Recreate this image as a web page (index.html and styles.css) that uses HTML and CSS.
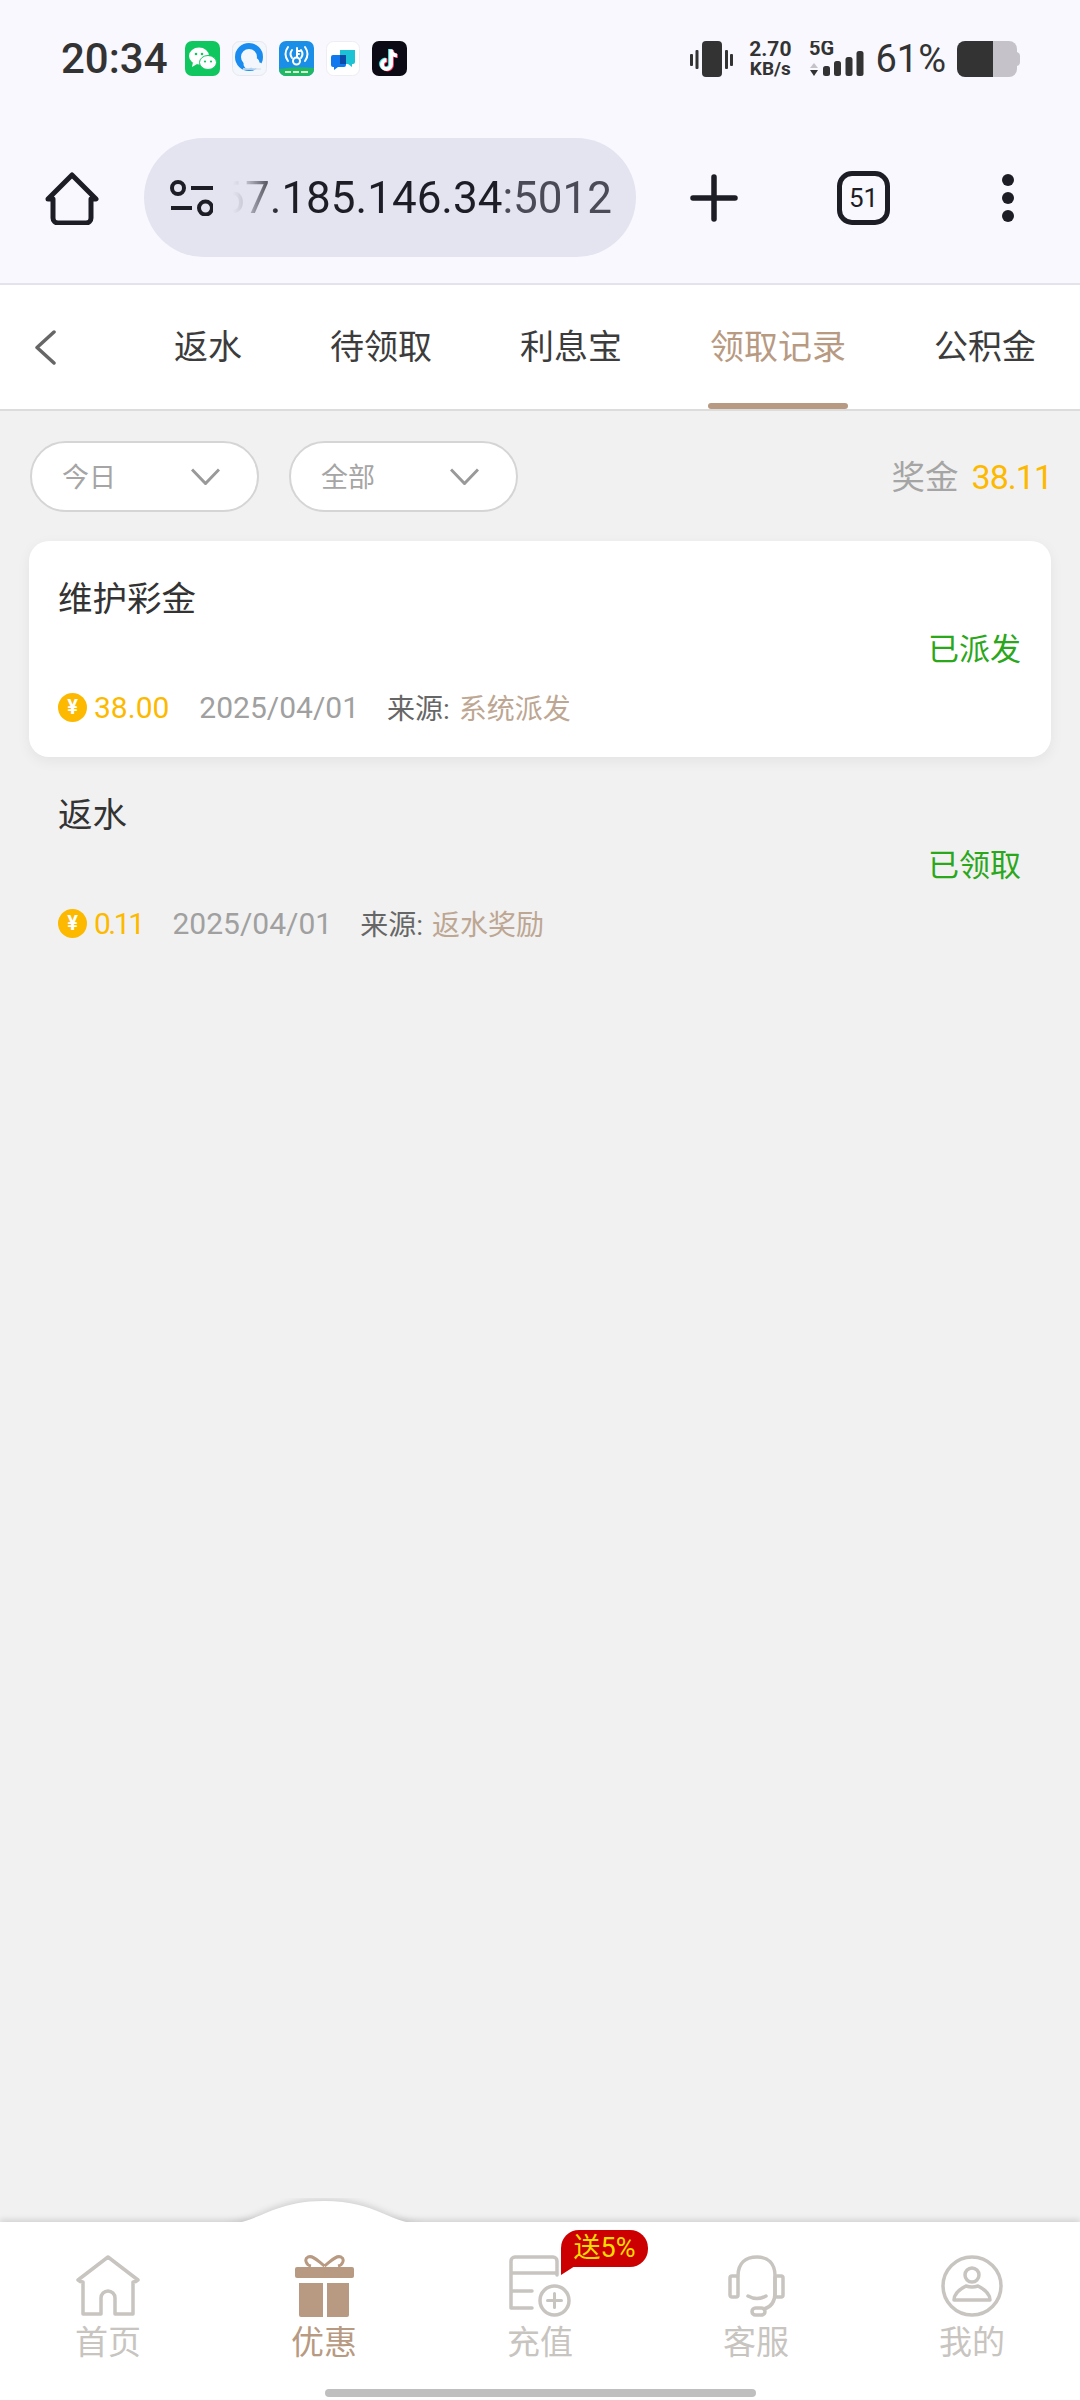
FILE: index.html
```html
<!DOCTYPE html>
<html lang="zh-CN">
<head>
    <meta charset="UTF-8">
    <meta name="viewport" content="width=device-width, initial-scale=1.0">
    <title>领取记录</title>
    <link rel="stylesheet" href="styles.css">
</head>
<body>
    <header class="chrome">
        <div class="statusbar">
            <span class="clock">20:34</span>
            <div class="app-icons">
                <svg width="35" height="35" viewBox="0 0 35 35"><rect width="35" height="35" rx="7" fill="#10c75f"/><ellipse cx="14" cy="15" rx="10" ry="8.5" fill="#fff"/><path d="M8 21l-1 5 5-3z" fill="#fff"/><ellipse cx="23" cy="21.500" rx="8.500" ry="7" fill="#fff" stroke="#10c75f"/><circle cx="11" cy="13" r="1.300" fill="#10c75f"/><circle cx="17" cy="13" r="1.300" fill="#10c75f"/><circle cx="20" cy="20.500" r="1.100" fill="#10c75f"/><circle cx="26" cy="20.500" r="1.100" fill="#10c75f"/></svg>
                <svg width="35" height="35" viewBox="0 0 35 35"><rect x=".5" y=".5" width="34" height="34" rx="7" fill="#f3f6fb" stroke="#e5e8ef"/><circle cx="17" cy="16" r="11" fill="none" stroke="#1a8cf0" stroke-width="6"/><circle cx="16" cy="23" r="4.500" fill="#f3f6fb"/><circle cx="22" cy="22" r="5.500" fill="#f3f6fb"/><circle cx="27" cy="25" r="3.500" fill="#f3f6fb"/><path d="M11 28h18" stroke="#dfe6f0" stroke-width="1.500"/></svg>
                <svg width="35" height="35" viewBox="0 0 35 35"><rect width="35" height="35" rx="7" fill="#1b8fe8"/><path d="M0 28q17-3 35-1v1a7 7 0 0 1-7 7H7a7 7 0 0 1-7-7z" fill="#20b863"/><g fill="none" stroke="#fff" stroke-width="2" stroke-linecap="round"><path d="M9 6q-5 7 0 14M26 6q5 7 0 14M13 9q-3 4 0 8M22 9q3 4 0 8"/><circle cx="17.500" cy="20" r="3.500"/><path d="M18 7v9M18 10h3M18 13h2"/></g><path d="M6 31h6M14 31h6M22 31h7" stroke="#d8f5c8" stroke-width="2"/></svg>
                <svg width="34" height="35" viewBox="0 0 34 35"><rect x=".5" y=".5" width="33" height="34" rx="7" fill="#fff" stroke="#eceef2"/><path d="M14 9h15v12a2 2 0 0 1-2 2h-1v3l-4-3h-8z" fill="#1cc3d4"/><path d="M7 14h13v10a2 2 0 0 1-2 2h-6l-4 3v-3H7a2 2 0 0 1-2-2v-8a2 2 0 0 1 2-2z" fill="#0f78ee"/><rect x="14" y="14" width="6" height="9" fill="#0b4aa8"/></svg>
                <svg width="35" height="35" viewBox="0 0 35 35"><rect width="35" height="35" rx="7" fill="#0c0a14"/><g fill="none" stroke-width="4"><path d="M18 8v15a4.500 4.500 0 1 1-4.500-4.500M18 8c0 4 3 6 6 6" stroke="#25e0e6"/><path d="M20 9v15a4.500 4.500 0 1 1-4.500-4.500M20 9c0 4 3 6 6 6" stroke="#fb2c55"/><path d="M19 8.500v15a4.500 4.500 0 1 1-4.500-4.500M19 8.500c0 4 3 6 6 6" stroke="#fff"/></g></svg>
            </div>
            <div class="status-right">
                <svg width="43" height="36" viewBox="0 0 43 36" fill="#333"><rect x="12" width="20" height="36" rx="4"/><rect y="13" width="3" height="12" rx="1"/><rect x="5.500" y="9" width="3" height="19" rx="1"/><rect x="35" y="9" width="3" height="19" rx="1"/><rect x="40" y="13" width="3" height="12" rx="1"/></svg>
                <div class="speed"><span>2.70</span><span class="speed-unit">KB/s</span></div>
                <svg class="net" width="55" height="36" viewBox="0 0 55 36" fill="#333"><text x="0" y="14" class="net-label">5G</text><path d="M1 27l4-5 4 5z" fill="#c5c3c9"/><path d="M1 29h8l-4 6z"/><rect x="14" y="25" width="7" height="10" rx="2.500"/><rect x="25" y="20" width="7" height="15" rx="2.500"/><rect x="36.500" y="16" width="7" height="19" rx="2.500"/><rect x="47.500" y="10" width="7" height="25" rx="2.500"/></svg>
                <span class="battery-text">61%</span>
                <svg width="63" height="36" viewBox="0 0 63 36"><path d="M36 0v36H8a8 8 0 0 1-8-8V8a8 8 0 0 1 8-8z" fill="#333"/><path d="M36 0h16a8 8 0 0 1 8 8v20a8 8 0 0 1-8 8H36z" fill="#c5c3c9"/><path d="M60 11q3 1 3 4v6q0 3-3 4z" fill="#c5c3c9"/></svg>
            </div>
        </div>
        <div class="toolbar">
            <svg class="tool-home" width="54" height="54" viewBox="0 0 54 54" fill="none" stroke="#1d1d26" stroke-width="5" stroke-linejoin="round"><path d="M3 28L27 4l24 24h-5v19a5 5 0 0 1-5 5H13a5 5 0 0 1-5-5V28z"/></svg>
            <div class="urlbar">
                <svg width="43" height="36" viewBox="0 0 43 36" fill="none" stroke="#1d1d26" stroke-width="4"><circle cx="8" cy="8" r="6"/><path d="M21 8h22M1 28h21"/><circle cx="35.500" cy="28" r="6.500"/></svg>
                <div class="url"><span>67.185.146.34<span class="url-port">:5012</span></span></div>
            </div>
            <svg class="tool-plus" width="48" height="48" viewBox="0 0 48 48" stroke="#1d1d26" stroke-width="5.500" stroke-linecap="round"><path d="M24 3v42M3 24h42"/></svg>
            <div class="tool-tabs">51</div>
            <div class="tool-more"><i></i><i></i><i></i></div>
        </div>
    </header>

    <nav class="tabs">
        <svg class="back" width="22" height="35" viewBox="0 0 22 35" fill="none" stroke="#666" stroke-width="3.500" stroke-linecap="round" stroke-linejoin="round"><path d="M20 2L3 17.500 20 33"/></svg>
        <div class="tab-list">
            <span class="tab">返水</span>
            <span class="tab">待领取</span>
            <span class="tab">利息宝</span>
            <span class="tab tab-active">领取记录</span>
            <span class="tab">公积金</span>
        </div>
    </nav>

    <main class="content">
        <div class="filters">
            <div class="select"><span>今日</span><svg width="29" height="17" viewBox="0 0 29 17" fill="none" stroke="#999" stroke-width="3"><path d="M1 1.500l13.500 14L28 1.500"/></svg></div>
            <div class="select"><span>全部</span><svg width="29" height="17" viewBox="0 0 29 17" fill="none" stroke="#999" stroke-width="3"><path d="M1 1.500l13.500 14L28 1.500"/></svg></div>
            <div class="bonus"><span class="bonus-label">奖金</span><span class="bonus-value">38.11</span></div>
        </div>

        <div class="record record-card">
            <div class="record-title">维护彩金</div>
            <div class="record-state">已派发</div>
            <div class="record-meta">
                <i class="coin">¥</i>
                <span class="amount">38.00</span>
                <span class="date">2025/04/01</span>
                <span class="source">来源:</span>
                <span class="source-value">系统派发</span>
            </div>
        </div>

        <div class="record">
            <div class="record-title">返水</div>
            <div class="record-state">已领取</div>
            <div class="record-meta">
                <i class="coin">¥</i>
                <span class="amount amount-narrow">0.11</span>
                <span class="date">2025/04/01</span>
                <span class="source">来源:</span>
                <span class="source-value">返水奖励</span>
            </div>
        </div>
    </main>

    <footer class="bottom-nav">
        <svg class="hump" width="290" height="24" viewBox="0 0 290 24"><path d="M40 27C78 27 90 3 144 3S210 27 248 27z" fill="#fff"/></svg>
        <div class="nav-row">
            <div class="nav-item">
                <svg width="64" height="62" viewBox="0 0 64 62" fill="none" stroke="#c8c4c0" stroke-width="3.500" stroke-linejoin="round" stroke-linecap="round"><path d="M2 25L32 2l30 23q-2 2-5 2v32H39V43a7 7 0 0 0-14 0v16H7V27q-3 0-5-2z"/></svg>
                <span>首页</span>
            </div>
            <div class="nav-item nav-active">
                <svg width="59" height="62" viewBox="0 0 59 62" fill="#b89a82"><path d="M29.500 11C23 6 18 0 13 2c-4 2-2 8 3 9M29.500 11C36 6 41 0 46 2c4 2 2 8-3 9" fill="none" stroke="#b89a82" stroke-width="3"/><rect y="12" width="59" height="11" rx="2"/><path d="M4 28h24v34H6a2 2 0 0 1-2-2zM32 28h22v32a2 2 0 0 1-2 2H32z"/></svg>
                <span>优惠</span>
            </div>
            <div class="nav-item">
                <div class="charge">
                    <svg width="62" height="62" viewBox="0 0 62 62" fill="none" stroke="#c8c4c0" stroke-width="3.500" stroke-linecap="round" stroke-linejoin="round"><path d="M2 53V6a4 4 0 0 1 4-4h38a4 4 0 0 1 4 4v14M2 18h46M2 36h21M2 53h21"/><circle cx="45.500" cy="45.500" r="14.500"/><path d="M45.500 38.500v14M38.500 45.500h14" stroke-width="3"/></svg>
                    <span class="badge">送5%</span>
                </div>
                <span>充值</span>
            </div>
            <div class="nav-item">
                <svg width="57" height="62" viewBox="0 0 57 62" fill="none" stroke="#c8c4c0" stroke-width="3.500" stroke-linecap="round" stroke-linejoin="round"><rect x="2" y="21" width="8" height="21" rx="2"/><rect x="47" y="21" width="8" height="21" rx="2"/><path d="M10 21C10 8 18 2 29 2s18 6 18 19v17c0 9-4 14-11 16"/><path d="M20 41q9 5 18 0"/><rect x="24" y="53" width="13" height="7" rx="3.500"/></svg>
                <span>客服</span>
            </div>
            <div class="nav-item">
                <svg width="62" height="62" viewBox="0 0 62 62" fill="none" stroke="#c8c4c0" stroke-width="3.500" stroke-linejoin="round"><circle cx="31" cy="31" r="29"/><circle cx="31" cy="20" r="7"/><path d="M13 45c0-7 6-11 12-14q6 2 12 0c6 3 12 7 12 14z"/></svg>
                <span>我的</span>
            </div>
        </div>
        <div class="home-bar"></div>
    </footer>
</body>
</html>
```

FILE: styles.css
```css
* {
    box-sizing: border-box;
}
body {
    margin: 0;
    width: 1080px;
    height: 2400px;
    display: flex;
    flex-direction: column;
    overflow: hidden;
    background-color: #f1f1f1;
    font-family: Roboto, "Noto Sans CJK SC", sans-serif;
    color: #333;
}

/* browser chrome */
.chrome {
    background-color: #f8f8fe;
    border-bottom: 2px solid #e4e3ec;
}
.statusbar {
    height: 117px;
    padding: 0 60px 0 61px;
    display: flex;
    align-items: center;
}
.clock {
    font-size: 42px;
    font-weight: 500;
    color: #333;
}
.app-icons {
    margin-left: 17px;
    display: flex;
    gap: 12px;
}
.status-right {
    margin-left: auto;
    display: flex;
    align-items: center;
}
.speed {
    margin-left: 16px;
    display: flex;
    flex-direction: column;
    align-items: center;
    font-size: 21px;
    font-weight: 700;
    line-height: 20px;
}
.speed-unit {
    font-size: 19px;
}
.net {
    margin-left: 18px;
}
.net-label {
    font-family: Roboto, sans-serif;
    font-size: 20px;
    font-weight: 700;
}
.battery-text {
    margin: 0 11px;
    font-size: 38px;
    color: #333;
}
.toolbar {
    height: 166px;
    padding: 21px 0 26px 45px;
    display: flex;
    align-items: center;
}
.urlbar {
    width: 492px;
    height: 119px;
    margin-left: 45px;
    padding: 0 24px 0 26px;
    border-radius: 60px;
    background-color: #e3e4f0;
    display: flex;
    align-items: center;
}
.url {
    flex: 1;
    margin-left: 12px;
    display: flex;
    justify-content: flex-end;
    overflow: hidden;
    white-space: nowrap;
    font-size: 44px;
    color: #1d1d26;
    -webkit-mask-image: linear-gradient(to right, transparent 8px, rgba(0, 0, 0, 0.15) 20px, rgba(0, 0, 0, 0.5) 34px, #000 54px);
    mask-image: linear-gradient(to right, transparent 8px, rgba(0, 0, 0, 0.15) 20px, rgba(0, 0, 0, 0.5) 34px, #000 54px);
}
.url-port {
    color: #4b4b58;
}
.tool-plus {
    margin-left: 54px;
}
.tool-tabs {
    width: 53px;
    height: 54px;
    margin-left: 99px;
    border: 5px solid #1d1d26;
    border-radius: 15px;
    display: flex;
    align-items: center;
    justify-content: center;
    font-size: 26px;
    color: #1d1d26;
}
.tool-more {
    margin-left: 112px;
    display: flex;
    flex-direction: column;
    gap: 6px;
}
.tool-more i {
    width: 12px;
    height: 12px;
    border-radius: 50%;
    background-color: #1d1d26;
}

/* tabs */
.tabs {
    height: 126px;
    padding-left: 34px;
    background-color: #fff;
    border-bottom: 2px solid #dcdcdc;
    display: flex;
    align-items: center;
    overflow: hidden;
}
.back {
    flex: none;
}
.tab-list {
    height: 100%;
    margin-left: 74px;
    display: flex;
}
.tab {
    position: relative;
    padding: 0 44px 5px;
    display: flex;
    align-items: center;
    white-space: nowrap;
    font-size: 34px;
    color: #3c3c3c;
}
.tab-active {
    color: #b89a82;
}
.tab-active::after {
    content: "";
    position: absolute;
    left: 42px;
    right: 42px;
    bottom: 0;
    height: 6px;
    border-radius: 3px;
    background-color: #b89a82;
}

/* filters */
.content {
    flex: 1;
    padding-top: 30px;
}
.filters {
    height: 71px;
    padding: 0 28px 0 30px;
    display: flex;
    align-items: center;
    gap: 30px;
}
.select {
    width: 229px;
    height: 71px;
    padding: 0 37px 3px 30px;
    border: 2px solid #d5d5d5;
    border-radius: 36px;
    background-color: #fff;
    display: flex;
    align-items: center;
    justify-content: space-between;
    font-size: 27px;
    color: #a5a5a5;
}
.select svg {
    margin-top: 3px;
}
.bonus {
    margin-left: auto;
    display: flex;
    align-items: center;
    gap: 13px;
    font-size: 33.500px;
    color: #a5a5a5;
}
.bonus-label {
    padding-bottom: 4px;
}
.bonus-value {
    font-size: 34px;
    letter-spacing: -1px;
    color: #fdb900;
}

/* records */
.record {
    height: 216px;
    margin: 0 29px;
    padding: 38px 30px 0 29px;
}
.content > .filters + .record {
    margin-top: 29px;
}
.record-card {
    border-radius: 20px;
    background-color: #fff;
    box-shadow: 0 4px 14px rgba(0, 0, 0, 0.06);
}
.record-title {
    font-size: 34.500px;
    line-height: 40px;
    color: #333;
}
.record-state {
    margin-top: 11px;
    text-align: right;
    font-size: 31px;
    line-height: 40px;
    color: #2aa71a;
}
.record-meta {
    margin-top: 20px;
    height: 34px;
    display: flex;
    align-items: center;
    white-space: nowrap;
}
.coin {
    width: 29px;
    height: 29px;
    border-radius: 50%;
    background-color: #fdb900;
    display: flex;
    align-items: center;
    justify-content: center;
    font-style: normal;
    font-size: 20px;
    font-weight: 700;
    color: #fff;
}
.amount {
    margin-left: 7px;
    font-size: 30px;
    color: #fdb900;
}
.amount-narrow {
    letter-spacing: -2.500px;
}
.date {
    margin-left: 30px;
    font-size: 30px;
    color: #a0a0a0;
}
.source {
    margin-left: 28px;
    font-size: 28px;
    color: #666;
}
.source-value {
    margin-left: 9px;
    font-size: 28px;
    color: #bda692;
}

/* bottom navigation */
.bottom-nav {
    position: relative;
    height: 178px;
    background-color: #fff;
    box-shadow: 0 -2px 6px rgba(0, 0, 0, 0.14);
}
.hump {
    position: absolute;
    left: 180px;
    bottom: 100%;
}
.hump path {
    filter: drop-shadow(0 -2px 3px rgba(0, 0, 0, 0.14));
}
.nav-row {
    padding-top: 33px;
    display: grid;
    grid-template-columns: repeat(5, 1fr);
}
.nav-item {
    display: flex;
    flex-direction: column;
    align-items: center;
    font-size: 33px;
    line-height: 36px;
    color: #c8c4c0;
}
.nav-item svg {
    display: block;
}
.nav-item > span {
    margin-top: 8px;
}
.nav-active {
    color: #b89a82;
}
.charge {
    position: relative;
    width: 62px;
    height: 62px;
}
.badge {
    position: absolute;
    left: 52px;
    top: -25px;
    width: 87px;
    height: 37px;
    border-radius: 18px 18px 18px 0;
    background-color: #cc0000;
    display: flex;
    align-items: center;
    justify-content: center;
    font-size: 27px;
    line-height: 37px;
    color: #ffdc00;
}
.badge::after {
    content: "";
    position: absolute;
    left: 0;
    top: 36px;
    width: 14px;
    height: 9px;
    background-color: #cc0000;
    clip-path: polygon(0 0, 100% 0, 0 100%);
}
.home-bar {
    width: 431px;
    height: 8px;
    margin: 28px auto 0;
    border-radius: 4px;
    background-color: #bfbfbf;
}
```
